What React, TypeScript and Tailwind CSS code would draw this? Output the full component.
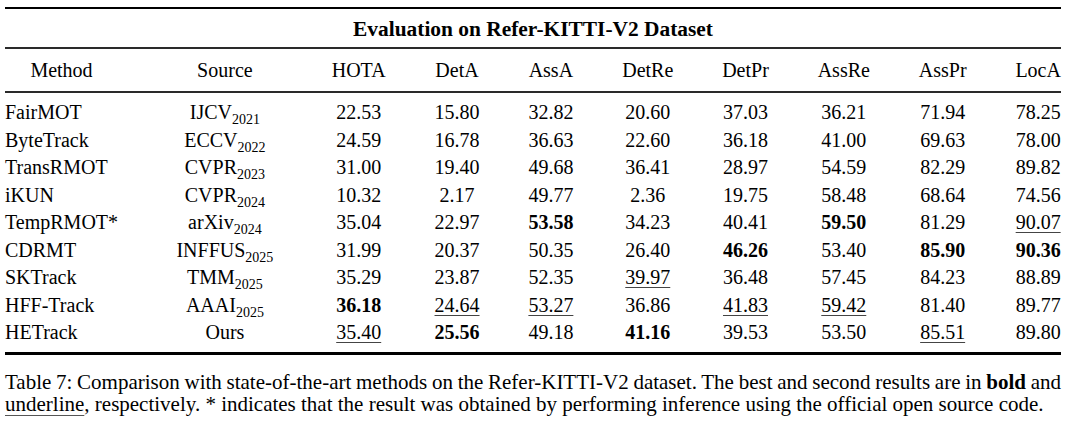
import type { ReactNode } from "react";

type Cell = { v: string; mark?: "b" | "u" };

type Row = {
  method: string;
  venue: string;
  year?: string;
  cells: Cell[];
};

const HEADERS = ["HOTA", "DetA", "AssA", "DetRe", "DetPr", "AssRe", "AssPr", "LocA"];

const n = (v: string): Cell => ({ v });
const b = (v: string): Cell => ({ v, mark: "b" });
const u = (v: string): Cell => ({ v, mark: "u" });

const ROWS: Row[] = [
  { method: "FairMOT", venue: "IJCV", year: "2021", cells: [n("22.53"), n("15.80"), n("32.82"), n("20.60"), n("37.03"), n("36.21"), n("71.94"), n("78.25")] },
  { method: "ByteTrack", venue: "ECCV", year: "2022", cells: [n("24.59"), n("16.78"), n("36.63"), n("22.60"), n("36.18"), n("41.00"), n("69.63"), n("78.00")] },
  { method: "TransRMOT", venue: "CVPR", year: "2023", cells: [n("31.00"), n("19.40"), n("49.68"), n("36.41"), n("28.97"), n("54.59"), n("82.29"), n("89.82")] },
  { method: "iKUN", venue: "CVPR", year: "2024", cells: [n("10.32"), n("2.17"), n("49.77"), n("2.36"), n("19.75"), n("58.48"), n("68.64"), n("74.56")] },
  { method: "TempRMOT*", venue: "arXiv", year: "2024", cells: [n("35.04"), n("22.97"), b("53.58"), n("34.23"), n("40.41"), b("59.50"), n("81.29"), u("90.07")] },
  { method: "CDRMT", venue: "INFFUS", year: "2025", cells: [n("31.99"), n("20.37"), n("50.35"), n("26.40"), b("46.26"), n("53.40"), b("85.90"), b("90.36")] },
  { method: "SKTrack", venue: "TMM", year: "2025", cells: [n("35.29"), n("23.87"), n("52.35"), u("39.97"), n("36.48"), n("57.45"), n("84.23"), n("88.89")] },
  { method: "HFF-Track", venue: "AAAI", year: "2025", cells: [b("36.18"), u("24.64"), u("53.27"), n("36.86"), u("41.83"), u("59.42"), n("81.40"), n("89.77")] },
  { method: "HETrack", venue: "Ours", cells: [u("35.40"), b("25.56"), n("49.18"), b("41.16"), n("39.53"), n("53.50"), u("85.51"), n("89.80")] },
];

function Value({ cell }: { cell: Cell }) {
  if (cell.mark === "b") return <span className="font-bold">{cell.v}</span>;
  if (cell.mark === "u")
    return <span className="underline decoration-1 decoration-[#444] underline-offset-[3px]">{cell.v}</span>;
  return <span>{cell.v}</span>;
}

function Rule({ className }: { className: string }) {
  return <div className={`w-full ${className}`} />;
}

function Venue({ row }: { row: Row }): ReactNode {
  return (
    <>
      {row.venue}
      {row.year ? <sub className="-bottom-[5px] text-[14px]">{row.year}</sub> : null}
    </>
  );
}

export default function App() {
  return (
    <div className="min-h-screen w-full bg-white pt-[7px] font-['Liberation_Serif','Times_New_Roman',serif] text-black">
      <div className="ml-[5px] w-[1056px]">
        <Rule className="h-[2px] bg-black" />
        <div className="h-[38px] pt-[3px] text-center text-[21.4px] font-bold leading-[35px]">
          Evaluation on Refer-KITTI-V2 Dataset
        </div>
        <Rule className="h-[2px] bg-[#2a2a2a]" />

        <div className="grid grid-cols-[repeat(10,auto)] justify-between text-[20px]">
          <div className="text-center leading-[42px]">Method</div>
          <div className="min-w-[116px] text-center leading-[42px]">Source</div>
          {HEADERS.map((h) => (
            <div key={h} className="text-center leading-[42px]">
              {h}
            </div>
          ))}

          <div className="col-span-full h-[2px] bg-[#2a2a2a]" />
          <div className="col-span-full h-[6px]" />

          {ROWS.map((row) => (
            <div key={row.method} className="contents">
              <div className="whitespace-nowrap text-left leading-[27.5px]">{row.method}</div>
              <div className="whitespace-nowrap text-center leading-[27.5px]">
                <Venue row={row} />
              </div>
              {row.cells.map((cell, i) => (
                <div key={HEADERS[i]} className="whitespace-nowrap text-center leading-[27.5px]">
                  <Value cell={cell} />
                </div>
              ))}
            </div>
          ))}

          <div className="col-span-full h-[5px]" />
        </div>
        <Rule className="h-[3px] bg-black" />

        <div className="mt-[16px] text-[21px] leading-[22px]">
          <div className="text-justify [text-align-last:justify] [word-spacing:-1px]">
            Table 7: Comparison with state-of-the-art methods on the Refer-KITTI-V2 dataset. The best and second
            results are in <span className="font-bold">bold</span> and
          </div>
          <div className="whitespace-nowrap">
            <span className="underline decoration-1 decoration-[#555] underline-offset-[4px]">underline</span>,
            respectively. * indicates that the result was obtained by performing inference using the official open
            source code.
          </div>
        </div>
      </div>
    </div>
  );
}
